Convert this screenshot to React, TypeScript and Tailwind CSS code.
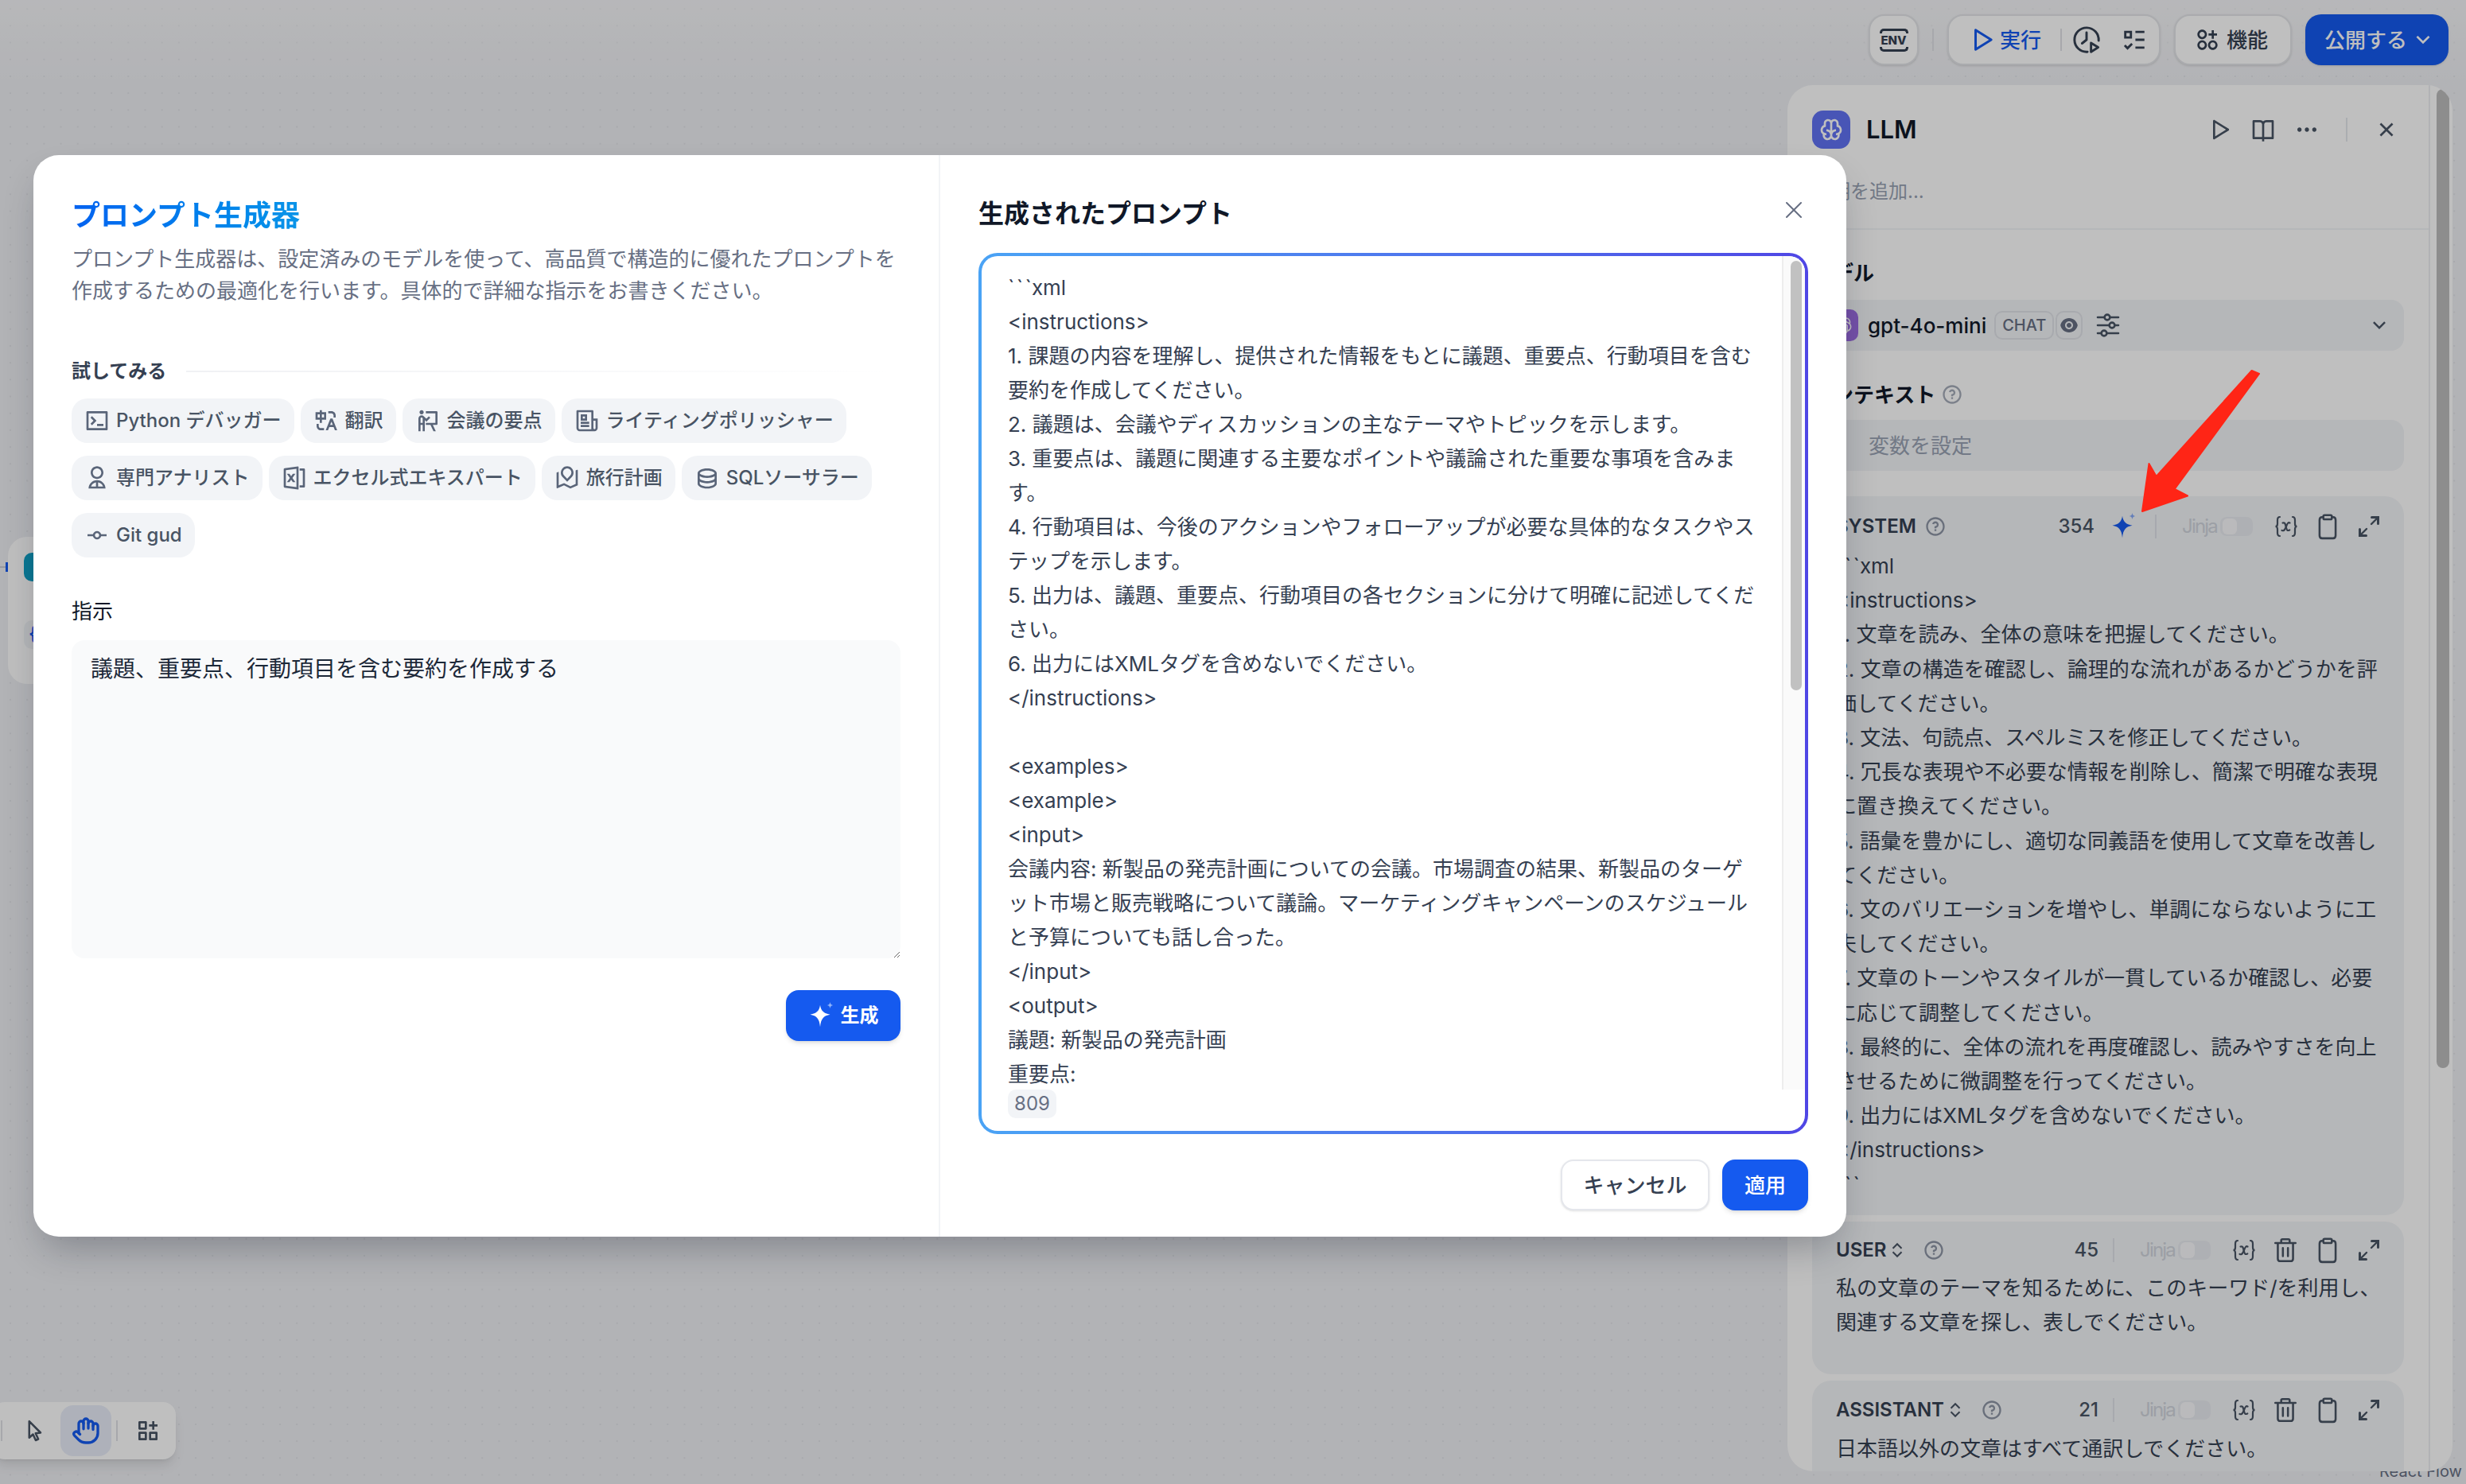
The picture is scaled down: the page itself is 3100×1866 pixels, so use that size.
import type { ReactNode } from 'react';
import {
  RiApps2AddLine,
  RiArrowDownSLine,
  RiBookOpenLine,
  RiBrainLine,
  RiCloseLine,
  RiDatabase2Line,
  RiExpandUpDownLine,
  RiEyeFill,
  RiFileExcel2Line,
  RiFunctionAddLine,
  RiGitCommitLine,
  RiListCheck3,
  RiMoreFill,
  RiNewspaperLine,
  RiOpenaiFill,
  RiPlayLargeLine,
  RiPresentationLine,
  RiQuestionLine,
  RiRoadMapLine,
  RiTerminalBoxLine,
  RiTranslate,
  RiUser2Line,
} from 'react-icons/ri';
import { Hand, X } from 'lucide-react';

const TICKS = '`\u200a`\u200a`';

const GENERATED = `${TICKS}xml
<instructions>
1. 課題の内容を理解し、提供された情報をもとに議題、重要点、行動項目を含む
要約を作成してください。
2. 議題は、会議やディスカッションの主なテーマやトピックを示します。
3. 重要点は、議題に関連する主要なポイントや議論された重要な事項を含みま
す。
4. 行動項目は、今後のアクションやフォローアップが必要な具体的なタスクやス
テップを示します。
5. 出力は、議題、重要点、行動項目の各セクションに分けて明確に記述してくだ
さい。
6. 出力にはXMLタグを含めないでください。
</instructions>

<examples>
<example>
<input>
会議内容: 新製品の発売計画についての会議。市場調査の結果、新製品のターゲ
ット市場と販売戦略について議論。マーケティングキャンペーンのスケジュール
と予算についても話し合った。
</input>
<output>
議題: 新製品の発売計画
重要点:`;

const SYSTEM = `${TICKS}xml
<instructions>
1. 文章を読み、全体の意味を把握してください。
2. 文章の構造を確認し、論理的な流れがあるかどうかを評
価してください。
3. 文法、句読点、スペルミスを修正してください。
4. 冗長な表現や不必要な情報を削除し、簡潔で明確な表現
に置き換えてください。
5. 語彙を豊かにし、適切な同義語を使用して文章を改善し
てください。
6. 文のバリエーションを増やし、単調にならないように工
夫してください。
7. 文章のトーンやスタイルが一貫しているか確認し、必要
に応じて調整してください。
8. 最終的に、全体の流れを再度確認し、読みやすさを向上
させるために微調整を行ってください。
9. 出力にはXMLタグを含めないでください。
</instructions>
${TICKS}`;

const TEMPLATES = [
  { icon: RiTerminalBoxLine, label: 'Python デバッガー' },
  { icon: RiTranslate, label: '翻訳' },
  { icon: RiPresentationLine, label: '会議の要点' },
  { icon: RiNewspaperLine, label: 'ライティングポリッシャー' },
  { icon: RiUser2Line, label: '専門アナリスト' },
  { icon: RiFileExcel2Line, label: 'エクセル式エキスパート' },
  { icon: RiRoadMapLine, label: '旅行計画' },
  { icon: RiDatabase2Line, label: 'SQLソーサラー' },
  { icon: RiGitCommitLine, label: 'Git gud' },
];

function Sparkle({ className, small }: { className?: string; small?: string }) {
  return (
    <svg viewBox="0 0 28 28" className={className}>
      <path d="M12 3c.8 5.600 3.400 8.400 10 9.600-6.600 1.200-9.200 4-10 12.400-.8-8.400-3.400-11.200-10-12.400 6.600-1.200 9.200-4 10-9.600z" fill="currentColor" />
      <path d="M22 0c.3 2 1 2.800 3 3.200-2 .4-2.700 1.200-3 3.200-.3-2-1-2.800-3-3.200 2-.4 2.700-1.200 3-3.200z" fill={small} />
    </svg>
  );
}

function VariableIcon() {
  return (
    <svg viewBox="0 0 32 32" className="size-[32px] text-[#495464]" fill="none" stroke="currentColor" strokeWidth="2.200" strokeLinecap="round">
      <path d="M8 4C5.500 4 5 5.500 5 8v4.500c0 2-1 3.500-2.500 3.500C4 16 5 17.500 5 19.500V24c0 2.500.5 4 3 4" />
      <path d="M24 4c2.500 0 3 1.500 3 4v4.500c0 2 1 3.500 2.500 3.500-1.500 0-2.500 1.500-2.500 3.500V24c0 2.500-.5 4-3 4" />
      <path d="M11.500 11.500c2.500-.8 3 .5 3.800 3.500l1 3.500c.8 2.700 1.500 3 4 2" />
      <path d="M20.500 11.500c-2-1-3 .5-4.500 4.500s-3 6-5.500 5" />
    </svg>
  );
}

function ClipboardIcon() {
  return (
    <svg viewBox="0 0 32 32" className="size-[34px] text-[#495464]" fill="none" stroke="currentColor" strokeWidth="2.400">
      <path d="M11 5H9.500C7.500 5 6.500 6.500 6.500 8.500v18c0 2 1 3.500 3 3.500h13c2 0 3-1.500 3-3.500v-18c0-2-1-3.500-3-3.500H21" />
      <rect x="11" y="2.500" width="10" height="5" rx="1.500" />
    </svg>
  );
}

function TrashIcon() {
  return (
    <svg viewBox="0 0 32 32" className="size-[34px] text-[#495464]" fill="none" stroke="currentColor" strokeWidth="2.400" strokeLinecap="round">
      <path d="M11 7V4.500C11 3.500 11.500 3 12.500 3h7c1 0 1.500.5 1.500 1.500V7" />
      <path d="M4 7.500h24" />
      <path d="M7 8v18c0 2 1 3 3 3h12c2 0 3-1 3-3V8" />
      <path d="M13 13.500v9.500M19 13.500v9.500" />
    </svg>
  );
}

function ExpandIcon() {
  return (
    <svg viewBox="0 0 32 32" className="size-[32px] text-[#495464]" fill="none" stroke="currentColor" strokeWidth="2.400" strokeLinecap="round">
      <path d="M19 13l8-8" />
      <path d="M19.500 4.500H27.500V12.500" strokeWidth="3" />
      <path d="M13 19l-8 8" />
      <path d="M4.500 19.500V27.500H12.500" strokeWidth="3" />
    </svg>
  );
}

function SlidersIcon() {
  return (
    <svg viewBox="0 0 32 32" className="ml-[16px] size-[32px] text-[#495464]" fill="none" stroke="currentColor" strokeWidth="2.600" strokeLinecap="round">
      <path d="M3 6h8M19 6h10M3 16h14M25 16h4M3 26h4M15 26h14" />
      <circle cx="15" cy="6" r="3.400" />
      <circle cx="21" cy="16" r="3.400" />
      <circle cx="11" cy="26" r="3.400" />
    </svg>
  );
}

function Toggle() {
  return (
    <div className="flex h-[24px] w-[41px] items-center rounded-[8px] bg-[#e9ebf0] pl-[3px]">
      <div className="h-[20px] w-[18px] rounded-[6px] bg-white opacity-70" />
    </div>
  );
}

function PromptHeader({ label, count, chooser, spark }: { label: string; count: string; chooser?: boolean; spark?: boolean }) {
  return (
    <div className="flex h-[36px] items-center justify-between pr-[28px]">
      <div className="flex items-center">
        <span className="text-[24px] font-semibold text-[#354052]">{label}</span>
        {chooser && <RiExpandUpDownLine className="ml-[2px] size-[24px] text-[#495464]" />}
        <RiQuestionLine className={`size-[28px] text-[#8d95a5] ${chooser ? 'ml-[20px]' : 'ml-[10px]'}`} />
      </div>
      <div className="flex items-center">
        <span className="text-[24px] font-medium text-[#495464]">{count}</span>
        {spark && <Sparkle className="ml-[20px] size-[35px] text-[#155aef]" small="#84a9f7" />}
        <div className={`mr-[32px] h-[30px] w-[2px] bg-[#dfe2e8] ${spark ? 'ml-[21px]' : 'ml-[18px]'}`} />
        <span className="text-[24px] tracking-[-1.8px] text-[#d0d5dd]">Jinja</span>
        <div className="mr-[26px] ml-[4px]"><Toggle /></div>
        <div className="flex items-center gap-[19px]">
          <VariableIcon />
          {chooser && <TrashIcon />}
          <ClipboardIcon />
          <ExpandIcon />
        </div>
      </div>
    </div>
  );
}

function PromptCard({ children, className }: { children: ReactNode; className?: string }) {
  return <div className={`shrink-0 rounded-[24px] bg-[#f2f4f7] pt-[20px] pl-[30px] ${className}`}>{children}</div>;
}

function ToolGroup({ children, className }: { children: ReactNode; className?: string }) {
  return (
    <div className={`flex h-[64px] items-center rounded-[20px] border-2 border-[#e3e5e8] bg-white shadow-sm ${className}`}>
      {children}
    </div>
  );
}

function LlmPanel() {
  return (
    <div className="relative mr-[17px] mb-[16px] flex h-[1743px] w-[836px] overflow-hidden rounded-[32px] bg-white">
      <div className="flex w-[808px] shrink-0 flex-col border-r-2 border-[#eceef2]">
        <div className="border-b-2 border-[#f2f4f7] px-[31px] pt-[32px] pb-[30px]">
          <div className="flex h-[48px] items-center">
            <div className="flex size-[48px] items-center justify-center rounded-[14px] bg-[#6172f3]">
              <RiBrainLine className="size-[32px] text-white" />
            </div>
            <span className="ml-[20px] text-[31px] font-semibold text-[#101828]">LLM</span>
            <RiPlayLargeLine className="ml-auto size-[32px] text-[#495464]" />
            <RiBookOpenLine className="ml-[23px] size-[32px] text-[#495464]" />
            <RiMoreFill className="ml-[23px] size-[32px] text-[#495464]" />
            <div className="mr-[33px] ml-[33px] h-[30px] w-[2px] bg-[#e5e7ec]" />
            <RiCloseLine className="mr-[6px] size-[32px] text-[#495464]" />
          </div>
          <div className="mt-[38px] text-[24px] leading-[32px] text-[#98a2b3]">説明を追加...</div>
        </div>
        <div className="px-[31px] pt-[36px]">
          <div className="text-[26px] leading-[38px] font-semibold text-[#101828]">モデル</div>
          <div className="mt-[14px] flex h-[64px] items-center rounded-[16px] bg-[#f2f4f7] pr-[16px] pl-[18px]">
            <div className="flex size-[40px] items-center justify-center rounded-[10px] bg-[#9b6be0]">
              <RiOpenaiFill className="size-[28px] text-white" />
            </div>
            <span className="ml-[12px] text-[26px] font-medium text-[#101828]">gpt-4o-mini</span>
            <span className="ml-[10px] rounded-[10px] border-2 border-[#e0e3e9] px-[8px] text-[20px] leading-[32px] font-medium text-[#676f83]">CHAT</span>
            <span className="ml-[2px] flex h-[36px] w-[34px] items-center justify-center rounded-[10px] border-2 border-[#e0e3e9]">
              <RiEyeFill className="size-[24px] text-[#676f83]" />
            </span>
            <SlidersIcon />
            <RiArrowDownSLine className="ml-auto size-[30px] text-[#495464]" />
          </div>
          <div className="mt-[36px] flex h-[38px] items-center text-[26px] font-semibold text-[#101828]">
            コンテキスト
            <RiQuestionLine className="ml-[7px] size-[28px] text-[#a5abb8]" />
          </div>
          <div className="mt-[13px] flex h-[64px] items-center rounded-[16px] bg-[#f2f4f7] pl-[71px] text-[26px] text-[#98a2b3]">変数を設定</div>
        </div>
        <div className="mt-[32px] flex flex-col gap-[8px] px-[31px]">
          <PromptCard className="h-[904px]">
            <PromptHeader label="SYSTEM" count="354" spark />
            <pre className="mt-[10px] text-[26px] leading-[43.2px] text-[#354052] [font-family:inherit]">{SYSTEM}</pre>
          </PromptCard>
          <PromptCard className="h-[192px] !pt-[18px]">
            <PromptHeader label="USER" count="45" chooser />
            <pre className="mt-[8px] text-[26px] leading-[43px] text-[#354052] [font-family:inherit]">{'私の文章のテーマを知るために、このキーワド/を利用し、\n関連する文章を探し、表しでください。'}</pre>
          </PromptCard>
          <PromptCard className="h-[192px] !pt-[19px]">
            <PromptHeader label="ASSISTANT" count="21" chooser />
            <pre className="mt-[9px] text-[26px] leading-[43px] text-[#354052] [font-family:inherit]">日本語以外の文章はすべて通訳しでください。</pre>
          </PromptCard>
        </div>
      </div>
      <div className="flex-1 pt-[5px] pl-[8px]">
        <div className="h-[1231px] w-[16px] rounded-full bg-[#bdbdbd]" />
      </div>
    </div>
  );
}

function PromptModal() {
  return (
    <div className="absolute top-[195px] left-[42px] flex h-[1360px] w-[2279px] overflow-hidden rounded-[32px] bg-white shadow-[0_24px_48px_-12px_rgba(16,24,40,0.3)]">
      <div className="w-[1140px] shrink-0 border-r-2 border-[#f2f4f7] px-[48px] pt-[54px]">
        <div className="w-fit bg-gradient-to-r from-[#0662f0] to-[#0b94e8] bg-clip-text text-[36px] leading-[44px] font-bold text-transparent">プロンプト生成器</div>
        <p className="mt-[13px] text-[26px] leading-[40px] text-[#676f83]">
          プロンプト生成器は、設定済みのモデルを使って、高品質で構造的に優れたプロンプトを
          <br />
          作成するための最適化を行います。具体的で詳細な指示をお書きください。
        </p>
        <div className="mt-[65px] flex h-[32px] items-center gap-[25px]">
          <span className="text-[24px] font-semibold text-[#354052]">試してみる</span>
          <div className="h-[2px] flex-1 bg-gradient-to-r from-[#f0f1f4] to-white" />
        </div>
        <div className="mt-[18px] flex flex-wrap gap-x-[8px] gap-y-[16px]">
          {TEMPLATES.map(({ icon: Icon, label }) => (
            <div key={label} className="flex h-[56px] items-center gap-[8px] rounded-[20px] bg-[#f2f4f7] px-[16px]">
              <Icon className="size-[32px] text-[#5a6579]" />
              <span className="text-[24px] font-medium text-[#495464]">{label}</span>
            </div>
          ))}
        </div>
        <div className="mt-[50px] text-[26px] leading-[36px] text-[#101828]">指示</div>
        <textarea
          defaultValue="議題、重要点、行動項目を含む要約を作成する"
          className="mt-[18px] block h-[400px] w-full rounded-[16px] bg-[#f9fafb] px-[24px] py-[16px] text-[28px] leading-[40px] text-[#1d2939] outline-none"
        />
        <div className="mt-[40px] flex justify-end">
          <button className="flex h-[64px] w-[144px] items-center justify-center gap-[6px] rounded-[16px] bg-[#155aef] text-[24px] font-semibold text-white shadow-md">
            <Sparkle className="size-[35px] text-white" small="#8fb3fb" />
            生成
          </button>
        </div>
      </div>
      <div className="flex-1 px-[48px] pt-[54px]">
        <div className="flex h-[40px] items-center justify-between">
          <span className="text-[32px] font-bold text-[#101828]">生成されたプロンプト</span>
          <X className="mb-[10px] size-[36px] text-[#676f83]" strokeWidth={1.33} />
        </div>
        <div className="mt-[29px] h-[1108px] rounded-[24px] bg-gradient-to-r from-[#4aa3f5] to-[#4f46e5] p-[4px]">
          <div className="h-full overflow-hidden rounded-[20px] bg-white">
            <div className="flex h-[1048px]">
              <pre className="flex-1 overflow-hidden pt-[18px] pl-[33px] text-[26px] leading-[43px] text-[#354052] [font-family:inherit]">{GENERATED}</pre>
              <div className="w-[29px] border-l-2 border-[#ededed] bg-[#fafafa] pt-[6px] pl-[9px]">
                <div className="h-[540px] w-[14px] rounded-full bg-[#c1c1c1]" />
              </div>
            </div>
            <div className="ml-[33px] flex h-[36px] w-[61px] items-center justify-center rounded-[10px] bg-[#f2f4f7] text-[24px] text-[#676f83]">809</div>
          </div>
        </div>
        <div className="mt-[32px] flex justify-end gap-[16px]">
          <button className="h-[64px] w-[187px] rounded-[16px] border-2 border-[#e5e7ec] bg-white text-[26px] font-medium text-[#354052] shadow-sm">キャンセル</button>
          <button className="h-[64px] w-[108px] rounded-[16px] bg-[#155aef] text-[26px] font-medium text-white shadow-md">適用</button>
        </div>
      </div>
    </div>
  );
}

export default function App() {
  return (
    <div
      lang="ja"
      className="relative h-[1866px] w-[3100px] overflow-hidden bg-[#eeeff3] bg-[radial-gradient(#e0e2e7_1.5px,transparent_1.5px)] bg-[size:21.2px_21.2px] bg-[position:2.4px_0.6px] [font-family:Inter,'Noto_Sans_CJK_JP',sans-serif]"
    >
      <div className="absolute top-[1840px] left-[2991px] text-[20px] leading-[20px] whitespace-nowrap text-[#676f83]">React Flow</div>

      <div className="flex h-full flex-col">
        <header className="flex h-[107px] shrink-0 items-start justify-end gap-[17px] bg-gradient-to-b from-white/40 to-transparent pt-[18px] pr-[22px]">
          <div className="flex h-[64px] items-center">
            <ToolGroup className="w-[63px] flex-col justify-center">
              <div className="h-[6px] w-[36px] rounded-t-[5px] border-x-[3px] border-t-[3px] border-[#354052]" />
              <span className="my-[1px] text-[15px] leading-[15px] font-extrabold text-[#354052]">ENV</span>
              <div className="h-[6px] w-[36px] rounded-b-[5px] border-x-[3px] border-b-[3px] border-[#354052]" />
            </ToolGroup>
            <div className="mx-[17px] h-[28px] w-[2px] bg-[#dfe1e6]" />
            <ToolGroup className="w-[268px] pl-[23px]">
              <RiPlayLargeLine className="size-[36px] text-[#155aef]" />
              <span className="ml-[5px] text-[26px] font-medium text-[#155aef]">実行</span>
              <div className="ml-[24px] h-[28px] w-[2px] bg-[#dfe1e6]" />
              <svg viewBox="0 0 32 32" className="ml-[13px] size-[36px] text-[#354052]" fill="none" stroke="currentColor" strokeWidth="2.600" strokeLinecap="round" strokeLinejoin="round">
                <path d="M17 29.500A13.500 13.500 0 1 1 29.500 17" />
                <path d="M16 8v8l-5 4" />
                <path d="M21 19.500l8 5-8 5z" />
              </svg>
              <RiListCheck3 className="ml-[25px] size-[34px] text-[#354052]" />
            </ToolGroup>
          </div>
          <ToolGroup className="w-[148px] pl-[24px]">
            <RiApps2AddLine className="size-[32px] text-[#354052]" />
            <span className="ml-[8px] text-[26px] font-medium text-[#354052]">機能</span>
          </ToolGroup>
          <div className="flex h-[64px] w-[180px] items-center rounded-[20px] bg-[#155aef] pl-[24px] text-white shadow-sm">
            <span className="text-[26px] font-medium">公開する</span>
            <RiArrowDownSLine className="ml-[4px] size-[32px]" />
          </div>
        </header>
        <div className="flex flex-1 justify-end">
          <LlmPanel />
        </div>
      </div>

      {/* partly hidden node behind the dialog */}
      <div className="absolute top-[707px] left-[7px] h-[12px] w-[3px] bg-[#155aef]" />
      <div className="absolute top-[712px] left-0 h-[2px] w-[7px] bg-[#c8ccd4]" />
      <div className="absolute top-[675px] left-[10px] h-[185px] w-[60px] rounded-[24px] bg-white pt-[20px] pl-[20px]">
        <div className="h-[36px] w-[36px] rounded-[10px] bg-[#0e9fc4]" />
        <div className="mt-[49px] h-[36px] w-[36px] rounded-[10px] bg-[#f2f4f7] pl-[6px] text-[24px] leading-[34px] font-semibold text-[#155aef]">{'{'}</div>
      </div>

      {/* canvas toolbar */}
      <div className="absolute top-[1763px] left-[-10px] flex h-[72px] w-[231px] items-center rounded-[16px] bg-white pl-[11px] shadow-lg">
        <div className="h-[26px] w-[2px] bg-[#dfe1e6]" />
        <svg viewBox="0 0 24 24" className="ml-[25px] size-[30px] text-[#495464]" fill="none" stroke="currentColor" strokeWidth="2" strokeLinejoin="round">
          <path d="M7 2.500V19l3.800-3.400 2.700 6 2.600-1.200-2.700-5.800 5-.6z" />
        </svg>
        <div className="ml-[18px] flex h-[64px] w-[64px] items-center justify-center rounded-[16px] bg-[#e8edf9]">
          <Hand className="size-[36px] text-[#155aef]" strokeWidth={2.2} />
        </div>
        <div className="ml-[6px] h-[26px] w-[2px] bg-[#dfe1e6]" />
        <RiFunctionAddLine className="ml-[22px] size-[32px] text-[#495464]" />
      </div>

      <div className="absolute inset-0 bg-black/25" />

      <svg viewBox="0 0 175 200" className="absolute top-[455px] left-[2680px] h-[200px] w-[175px]">
        <polygon
          points="13,188 21.500,128 30.700,144 150.600,11 160,15 53.700,160 70,168.500"
          fill="#ff2516"
          stroke="#ff2516"
          strokeWidth="2"
          strokeLinejoin="round"
        />
      </svg>

      <PromptModal />
    </div>
  );
}
